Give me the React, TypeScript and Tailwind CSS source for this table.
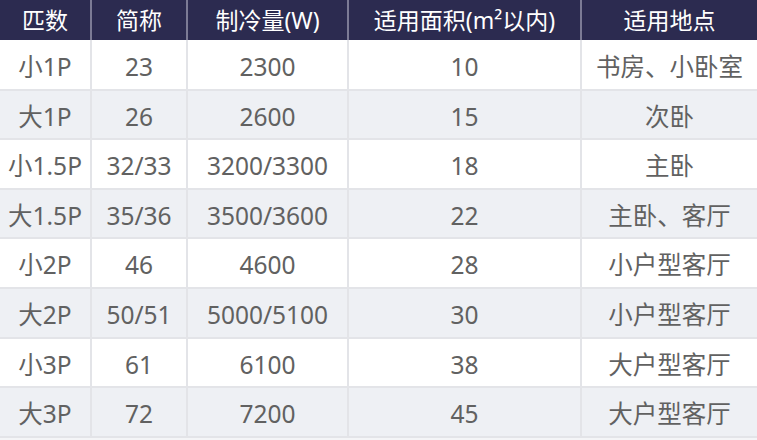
const headers = ['匹数', '简称', '制冷量(W)', '适用面积(m²以内)', '适用地点']

const rows = [
  ['小1P', '23', '2300', '10', '书房、小卧室'],
  ['大1P', '26', '2600', '15', '次卧'],
  ['小1.5P', '32/33', '3200/3300', '18', '主卧'],
  ['大1.5P', '35/36', '3500/3600', '22', '主卧、客厅'],
  ['小2P', '46', '4600', '28', '小户型客厅'],
  ['大2P', '50/51', '5000/5100', '30', '小户型客厅'],
  ['小3P', '61', '6100', '38', '大户型客厅'],
  ['大3P', '72', '7200', '45', '大户型客厅'],
]

const widths = ['w-[91px]', 'w-[96px]', 'w-[161px]', 'w-[233px]', 'w-[176px]']

export default function App() {
  return (
    <div className="w-[757px] h-[440px] overflow-hidden bg-[#f4f5f7] font-['Noto_Sans','Noto_Sans_CJK_SC',sans-serif]">
      <table className="w-[757px] table-fixed border-collapse">
        <thead>
          <tr className="h-[40px] bg-[#2c2b50]">
            {headers.map((h, i) => (
              <th
                key={h}
                className={`${widths[i]} p-0 text-center text-[23px] leading-none font-normal text-white whitespace-nowrap border-l-2 border-[#7c7b95] first:border-l-0`}
              >
                {h}
              </th>
            ))}
          </tr>
        </thead>
        <tbody>
          {rows.map((r, ri) => (
            <tr
              key={r[0]}
              className={`h-[49.6px] border-b-2 border-[#e3e4e8] ${ri % 2 === 0 ? 'bg-white' : 'bg-[#eef0f4]'}`}
            >
              {r.map((c, ci) => (
                <td
                  key={ci}
                  className="p-0 pt-[5px] text-center text-[24.5px] leading-none text-[#616161] whitespace-nowrap border-l-2 border-[#e3e4e8] first:border-l-0"
                >
                  {c}
                </td>
              ))}
            </tr>
          ))}
        </tbody>
      </table>
    </div>
  )
}
